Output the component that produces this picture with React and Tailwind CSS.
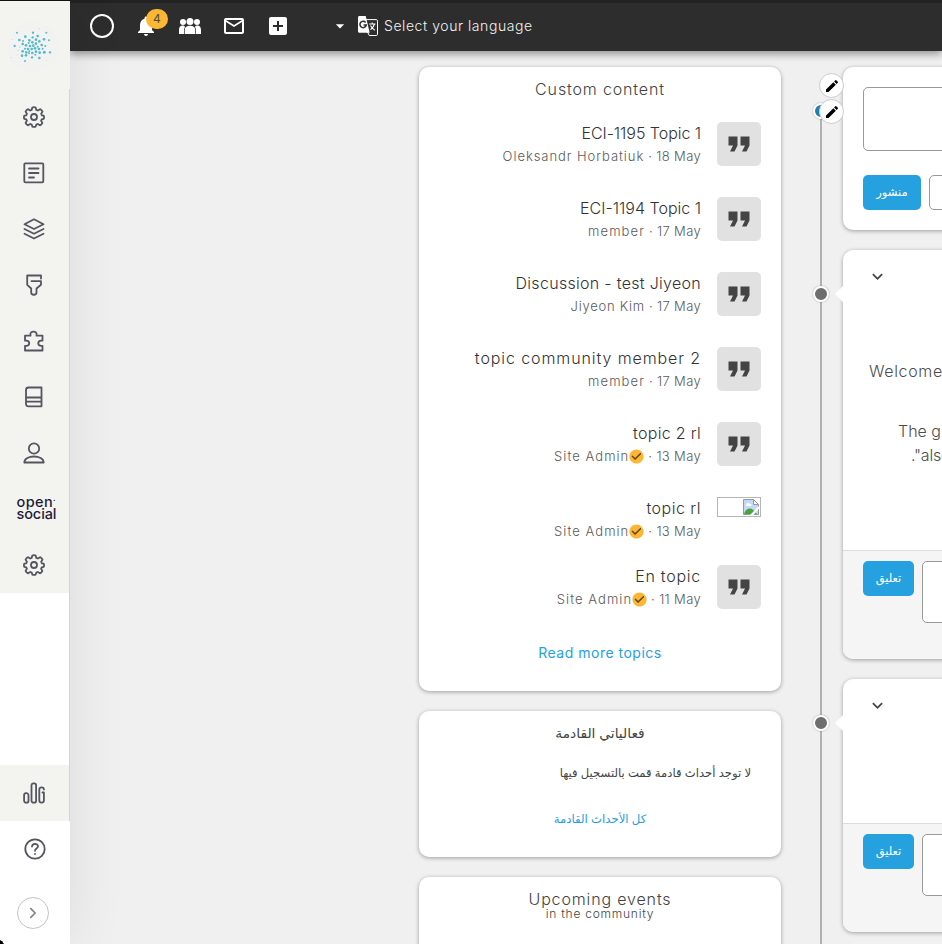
import {
  MdAddBox,
  MdArrowDropDown,
  MdCheckCircle,
  MdEdit,
  MdExpandMore,
  MdFormatQuote,
  MdMailOutline,
  MdNotifications,
} from "react-icons/md";

const topics = [
  { title: "ECI-1195 Topic 1", author: "Oleksandr Horbatiuk", date: "18 May", titleTrack: "tracking-[-0.05px]", metaTrack: "tracking-[0.95px]" },
  { title: "ECI-1194 Topic 1", author: "member", date: "17 May", titleTrack: "tracking-[0px]", metaTrack: "tracking-[1.1px]" },
  { title: "Discussion - test Jiyeon", author: "Jiyeon Kim", date: "17 May", titleTrack: "tracking-[0.3px]", metaTrack: "tracking-[0.75px]" },
  { title: "topic community member 2", author: "member", date: "17 May", titleTrack: "tracking-[0.9px]", metaTrack: "tracking-[1.1px]" },
  { title: "topic 2 rl", author: "Site Admin", date: "13 May", verified: true, titleTrack: "tracking-[0.3px]", metaTrack: "tracking-[1.05px]" },
  { title: "topic rl", author: "Site Admin", date: "13 May", verified: true, broken: true, titleTrack: "tracking-[0.5px]", metaTrack: "tracking-[1.05px]" },
  { title: "En topic", author: "Site Admin", date: "11 May", verified: true, titleTrack: "tracking-[0.75px]", metaTrack: "tracking-[1.05px]" },
];

// x, y, radius
const logoDots = [
  [51, 98, 3], [99, 98, 3.5], [139, 98, 3], [118, 86, 1.5], [36, 118, 1.5], [58, 120, 4], [76, 110, 4],
  [113, 108, 4], [98, 112, 3.5], [132, 118, 4], [147, 121, 3], [44, 138, 3.5], [69, 123, 3], [88, 121, 4],
  [68, 132, 4], [60, 141, 2], [78, 136, 4], [86, 129, 3], [97, 127, 4], [108, 119, 4], [118, 124, 4],
  [108, 131, 4], [125, 135, 4], [136, 138, 3], [90, 138, 4], [100, 137, 4], [113, 140, 3], [75, 146, 3],
  [84, 147, 4], [95, 147, 4], [105, 145, 4], [117, 147, 4], [128, 146, 3], [68, 154, 4], [55, 151, 2],
  [79, 157, 4], [88, 154, 3], [97, 159, 4], [108, 155, 4], [119, 158, 4], [133, 157, 4.5], [150, 157, 3.5],
  [78, 166, 4], [66, 167, 4], [52, 164, 1.5], [87, 160, 3], [96, 172, 3.5], [118, 174, 4], [75, 183, 3],
  [34, 173, 1.5], [139, 181, 1.5], [106, 164, 3],
];

function Icon({ children, size = 22, width = 1.8 }) {
  return (
    <svg
      width={size}
      height={size}
      viewBox="0 0 22 22"
      fill="none"
      stroke="currentColor"
      strokeWidth={width}
      strokeLinecap="round"
      strokeLinejoin="round"
    >
      {children}
    </svg>
  );
}

function GearIcon() {
  return (
    <Icon>
      <circle cx="11" cy="11" r="3" />
      <path d="M9.3 1.6q1.700-.8 3.400 0l.6 2.300 1.600.6 2.100-1.300q1.800.7 2.500 2.400l-1.300 2.100.6 1.600 1.900.3q.7 1.600 0 3.200l-2 .5-.6 1.500 1.300 2.100q-.7 1.700-2.500 2.400l-2.100-1.300-1.500.6-.6 2q-1.700.7-3.400 0l-.6-2-1.500-.6-2.100 1.300q-1.800-.7-2.500-2.400l1.300-2.100-.6-1.500-2-.5q-.7-1.600 0-3.200l2-.3.600-1.600-1.300-2.100q.7-1.700 2.500-2.400l2.100 1.300 1.500-.6z" />
    </Icon>
  );
}

const menu = [
  <GearIcon key="tools" />,
  <Icon key="content">
    <rect x="1.300" y="1.300" width="19" height="19" rx="1" />
    <path d="M6 6.500h9.500M6 11h9.500M6 15.500h5" />
  </Icon>,
  <Icon key="structure">
    <path d="M11 1.300l9.500 5L11 11 1.500 6.300zM1.500 11L11 15.700 20.500 11M1.500 15.700L11 20.500l9.500-4.800" />
  </Icon>,
  <Icon key="appearance">
    <path d="M18 4.500V1.500H4.200v9.300l4 3.700v4c0 3 5.300 3 5.300 0v-4l4.500-3.700V7.200H8.500" />
  </Icon>,
  <Icon key="extend">
    <path d="M2 5.700h5.500V4.900C6.300.5 14.700.5 13.500 4.900v.8H19.500v5h-1.300c-3.900.2-3.900 5 0 5.200h1.300v4.600H2v-4.600h1.300c3.900-.2 3.900-5 0-5.200H2z" />
  </Icon>,
  <Icon key="config">
    <path d="M5.500 1.500h13v18.800H5.500c-1.800 0-2.500-1-2.500-2.300V4c0-1.700 1-2.500 2.500-2.500zM3 11.500h15.500M3.500 15.600h15" />
  </Icon>,
  <Icon key="people">
    <circle cx="11" cy="6.500" r="5.200" />
    <path d="M1.300 20.500c0-8 19.400-8 19.400 0z" />
  </Icon>,
  <div key="brand" dir="ltr" className="mb-0.5 ml-1.5 w-10 text-[14.5px] font-medium leading-[12px] text-[#1e1b3a]">
    <div className="relative tracking-[0.4px]">open<span className="absolute top-[-2px] text-[8px]">·</span></div>
    <div className="tracking-[-0.1px]">social</div>
  </div>,
  <GearIcon key="settings" />,
];

function Sidebar() {
  return (
    <aside className="relative z-20 flex h-full w-[70px] shrink-0 flex-col border-t border-[#111] bg-white text-[#545560] shadow-[0_0_60px_rgba(0,0,0,0.09)]">
      <div className="h-[88px] bg-[#f3f4ef]">
        <svg width="70" height="88" viewBox="0 3 210 264">
          <circle cx="99" cy="141" r="76" fill="#f2f3f1" />
          {logoDots.map(([x, y, r]) => (
            <circle key={`${x}-${y}`} cx={x} cy={y} r={r} fill="#55b9d0" opacity={r < 2.5 ? 0.5 : 1} />
          ))}
        </svg>
      </div>
      <nav className="flex flex-col border-r border-[#d4d4d4] bg-[#f3f4ef]">
        {menu.map((item) => (
          <div key={item.key} className="flex h-14 items-center justify-center pr-[2px]">
            {item}
          </div>
        ))}
      </nav>
      <div className="h-[172px] border-r border-[#d4d4d4]" />
      <div className="flex h-14 items-center justify-center border-r border-[#d4d4d4] bg-[#f3f4ef] pr-[2px]">
        <Icon>
          <rect x="1.100" y="11.200" width="4.400" height="9.500" rx="2" />
          <rect x="8.500" y="1.300" width="4.600" height="19.400" rx="2" />
          <path d="M20.900 7.500c0-2.800-4.600-2.800-4.600 0v11c0 2.800 4.600 2.800 4.600 0v-8h-1.500" />
        </Icon>
      </div>
      <div className="flex h-14 items-center justify-center pr-px">
        <Icon>
          <circle cx="11" cy="11" r="9.700" />
          <path d="M8 8.500c.2-3.700 6-3.500 6-.2 0 2.100-3 2.200-3 4.500M11 15.800v.1" />
        </Icon>
      </div>
      <div className="mt-5 ml-[17px] flex size-8 items-center justify-center rounded-full border border-[#c4c4c8] text-[#858585]">
        <Icon size={16} width={2.4}>
          <path d="M8 5l6 6-6 6" />
        </Icon>
      </div>
      <span className="absolute bottom-0 left-0 size-1 bg-black [clip-path:polygon(0_0,50%_30%,100%_100%,0_100%)]" />
    </aside>
  );
}

function GroupsIcon() {
  return (
    <svg width="22" height="17" viewBox="0 0 22 17" fill="currentColor">
      <circle cx="4" cy="4" r="3" />
      <circle cx="18" cy="4" r="3" />
      <path d="M0 16v-4c0-6 6-5 6-3L5 11v5zM22 16v-4c0-6-6-5-6-3l1 2v5z" />
      <circle cx="11" cy="3.500" r="3.500" />
      <path d="M5.700 16v-4.300c0-5.200 10.600-5.200 10.600 0V16z" />
    </svg>
  );
}

function TranslateIcon() {
  return (
    <svg width="20" height="20" viewBox="0 0 20 20" fill="none" className="ml-2">
      <path d="M8 3.600h10.300c.7 0 1.200.5 1.200 1.200v13.500c0 .7-.5 1.200-1.200 1.200h-7L9.500 16" stroke="#fff" />
      <path d="M1.500 0h6.200l4 16.800H1.500C.6 16.800 0 16.200 0 15.300V1.500C0 .6.600 0 1.500 0z" fill="#fff" />
      <path d="M7.600 6.400a3.200 3.200 0 1 0 .7 2.500H5.600" stroke="#2d2d2d" strokeWidth="1.500" />
      <path d="M11.200 8h6.300M14.200 6.500V8M16.500 8c-.6 2.500-2.200 4.300-4 5.700M12.500 9.500c1 1.800 2.500 3.400 4.300 4.700" stroke="#fff" strokeWidth="1.100" />
    </svg>
  );
}

function TopBar() {
  return (
    <header className="relative z-10 flex h-[51px] shrink-0 items-center border-t-[3px] border-[#222] bg-[#2d2d2d] pb-0.5 pl-5 text-white shadow-[0_3px_8px_rgba(0,0,0,0.4)]">
      <div className="size-6 rounded-full border-2 border-white" />
      <div className="relative ml-5">
        <MdNotifications className="size-6" />
        <span className="absolute -top-[5px] left-3 flex h-5 w-[22px] items-center justify-center rounded-full bg-[#fdb632] text-[12px] text-[#4b4b4b]">
          4
        </span>
      </div>
      <div className="ml-[21px]">
        <GroupsIcon />
      </div>
      <MdMailOutline className="ml-[21px] size-6" />
      <MdAddBox className="ml-5 size-6" />
      <MdArrowDropDown className="ml-10 size-5" />
      <TranslateIcon />
      <span className="-mt-0.5 pl-1.5 text-[14px] font-light tracking-[0.56px] text-[#f3f3f3]">Select your language</span>
    </header>
  );
}

function BrokenImage() {
  return (
    <div className="flex h-5 w-11 items-center justify-end border border-[#b5b5b5] pr-px">
      <svg width="16" height="16" viewBox="0 0 16 16">
        <path d="M.5.5h10l5 5v10H.5z" fill="#c4d9f7" stroke="#999" />
        <path d="M10.500.5v5h5z" fill="#fff" stroke="#999" />
        <path d="M3 6c0-2 3-3 4-1 2 0 2 2 0 2H4C3 7 3 6 3 6z" fill="#fff" />
        <path d="M1 15c2-6 7-7 10-3l3 3z" fill="#4aa33c" />
        <path d="M16 7v2.500L10.500 16H7z" fill="#fff" />
      </svg>
    </div>
  );
}

function Topic({ title, author, date, verified, broken, titleTrack, metaTrack }) {
  return (
    <div className={`flex items-start gap-4 ${broken ? "h-[68px]" : "h-[75px]"}`}>
      <div className="flex-1 text-right whitespace-nowrap">
        <div className={`text-[16px] leading-[22px] font-light text-[#333] ${titleTrack}`}>{title}</div>
        <div className={`mt-0.5 flex items-center justify-end text-[13px] leading-5 font-light text-[#5a5a5a] ${metaTrack}`}>
          {author}
          {verified && (
            <span className="size-[15px] text-[#fdb632]">
              <MdCheckCircle className="-m-px size-[17px] rounded-full [background:radial-gradient(#5a4310_45%,transparent_46%)]" />
            </span>
          )}
          <span className="tracking-[0.35px] whitespace-pre"> · {date}</span>
        </div>
      </div>
      {broken ? (
        <BrokenImage />
      ) : (
        <div className="flex size-11 items-center justify-center rounded-[5px] bg-[#e1e1e1]">
          <MdFormatQuote className="size-9 text-[#444]" />
        </div>
      )}
    </div>
  );
}

function Card({ className, children }) {
  return (
    <section className={`rounded-[10px] bg-white shadow-[0_1px_4px_rgba(0,0,0,0.35)] ${className}`}>
      {children}
    </section>
  );
}

function Dot({ className }) {
  return (
    <span className={`absolute -left-[30px] size-4 rounded-full border-2 border-white shadow-[0_0_2px_rgba(0,0,0,0.3)] ${className}`} />
  );
}

function EditButton({ className }) {
  return (
    <button className={`absolute -left-6 flex size-[25px] items-center justify-center rounded-full border border-[#ccc] bg-white text-black ${className}`}>
      <MdEdit className="size-4" />
    </button>
  );
}

function Post({ className, children }) {
  return (
    <Card className={`relative flex flex-col ${className}`}>
      <Dot className="top-9 bg-[#6e6e6e]" />
      <span className="absolute top-9 -left-2 h-4 w-2 bg-white [clip-path:polygon(100%_0,0_50%,100%_100%)]" />
      <MdExpandMore className="mt-4 ml-6 size-[21px] shrink-0 text-[#444]" />
      <div dir="ltr" className="flex-1 text-[16px] leading-6 font-light text-[#4d4d4d]">{children}</div>
      <footer className="flex h-[109px] items-start gap-2 rounded-b-[10px] border-t border-[#ddd] bg-[#f5f5f5] pt-2.5 pl-5">
        <button className="h-[35px] w-[51px] rounded-[5px] bg-[#25a1df] text-[11.5px] text-white">تعليق</button>
        <div className="h-[62px] flex-1 rounded-[5px] border border-[#999] bg-white" />
      </footer>
    </Card>
  );
}

export default function App() {
  return (
    <div className="flex h-[944px] w-full overflow-hidden bg-[#f0f0f0] font-['Inter','DejaVu_Sans',sans-serif]">
      <Sidebar />
      <div className="flex min-w-0 flex-1 flex-col">
        <TopBar />
        <main className="flex min-h-0 flex-1 pl-[349px]">
          {/* Sidebar blocks */}
          <div className="mt-4 flex w-[362px] shrink-0 flex-col gap-5">
            <Card className="h-[624px] shrink-0 px-5 pt-3">
              <h2 className="text-center text-[16px] leading-5 font-light tracking-[0.85px] text-[#444]">Custom content</h2>
              <div className="mt-[23px]">
                {topics.map((topic) => (
                  <Topic key={topic.title} {...topic} />
                ))}
              </div>
              <a className="mt-[3px] block text-center text-[14px] leading-5 tracking-[0.5px] text-[#25a1df]">Read more topics</a>
            </Card>

            <Card className="h-[146px] shrink-0 px-[30px] pt-3 text-[#444]">
              <h2 dir="rtl" className="text-center text-[13.8px] leading-5">فعالياتي القادمة</h2>
              <p dir="rtl" className="mt-5 text-[11.6px] leading-5 whitespace-nowrap">لا توجد أحداث قادمة قمت بالتسجيل فيها</p>
              <a dir="rtl" className="mt-[26px] block text-center text-[11.7px] leading-5 text-[#25a1df]">كل الأحداث القادمة</a>
            </Card>

            <Card className="h-[146px] shrink-0 pt-3 text-center font-light text-[#444]">
              <h2 className="text-[16px] leading-5 tracking-[0.85px]">Upcoming events</h2>
              <p className="-mt-px text-[12px] leading-3 tracking-[0.75px]">in the community</p>
            </Card>
          </div>

          {/* Timeline */}
          <div className="w-[62px] shrink-0 pt-[61px] pl-[39px]">
            <div className="h-full w-0.5 bg-[#b1b1b1]" />
          </div>

          {/* Stream */}
          <div className="mt-4 flex w-[400px] shrink-0 flex-col gap-5">
            <Card className="relative h-[163px] px-5 pt-5">
              <Dot className="top-9 bg-[#1f80b0]" />
              <EditButton className="top-1.5" />
              <EditButton className="top-8" />
              <div className="h-16 w-[400px] rounded-[5px] border border-[#999]" />
              <div className="mt-6 flex gap-2">
                <button className="h-[35px] w-[58px] rounded-[5px] bg-[#25a1df] text-[11.5px] text-white">منشور</button>
                <div className="h-[35px] w-[120px] rounded-[5px] border border-[#999]" />
              </div>
            </Card>
            <Post className="h-[409px]">
              <p className="mt-[72px] pl-[26px] tracking-[0.65px]">Welcome</p>
              <p className="mt-9 pl-[55px]">The g</p>
              <p className="pl-[68px] tracking-[-0.2px]">."also</p>
            </Post>
            <Post className="h-[253px]" />
          </div>
        </main>
      </div>
    </div>
  );
}
